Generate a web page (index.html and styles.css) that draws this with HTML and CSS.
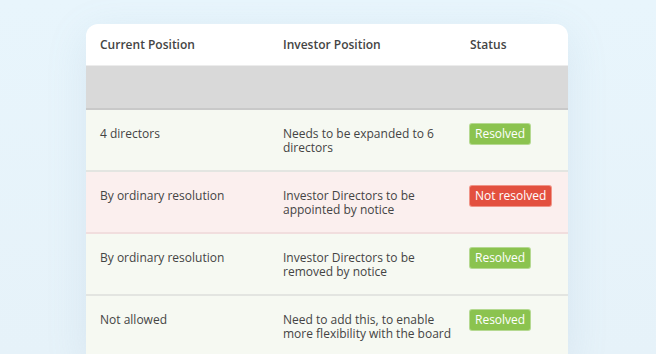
FILE: index.html
```html
<!DOCTYPE html>
<html>
<head>
    <title>Board Positions</title>
    <meta name="viewport" content="width=device-width, initial-scale=1.0">
    <link rel="stylesheet" href="styles.css">
</head>
<body>
    <div class="positions-card">
        <table class="positions-table">
            <colgroup>
                <col class="col-current">
                <col class="col-investor">
                <col class="col-status">
            </colgroup>
            <thead>
                <tr>
                    <th>Current Position</th>
                    <th>Investor Position</th>
                    <th>Status</th>
                </tr>
            </thead>
            <tbody>
                <tr class="row-blank">
                    <td colspan="3"></td>
                </tr>
                <tr class="row-ok">
                    <td>4 directors</td>
                    <td>Needs to be expanded to 6 directors</td>
                    <td><span class="badge resolved">Resolved</span></td>
                </tr>
                <tr class="row-bad">
                    <td>By ordinary resolution</td>
                    <td>Investor Directors to be appointed by notice</td>
                    <td><span class="badge not-resolved">Not resolved</span></td>
                </tr>
                <tr class="row-ok">
                    <td>By ordinary resolution</td>
                    <td>Investor Directors to be removed by notice</td>
                    <td><span class="badge resolved">Resolved</span></td>
                </tr>
                <tr class="row-ok">
                    <td>Not allowed</td>
                    <td>Need to add this, to enable more flexibility with the board</td>
                    <td><span class="badge resolved">Resolved</span></td>
                </tr>
            </tbody>
        </table>
    </div>
</body>
</html>
```

FILE: styles.css
```css
body {
    margin: 0;
    height: 354px;
    overflow: hidden;
    background: linear-gradient(180deg, #e8f5fc 0%, #e6f2f9 100%);
    font-family: 'Open Sans', 'Liberation Sans', sans-serif;
}

.positions-card {
    width: 482px;
    margin: 24px 0 0 86px;
    background-color: white;
    border-radius: 12px 12px 0 0;
    overflow: hidden;
    box-shadow: 0 10px 40px rgba(120, 160, 190, 0.15);
}

.positions-table {
    width: 100%;
    border-collapse: collapse;
    table-layout: fixed;
    font-size: 12px;
    line-height: 14px;
    color: #444;
}

.col-current {
    width: 183px;
}

.col-investor {
    width: 187px;
}

.positions-table th {
    text-align: left;
    font-weight: 600;
    color: #444;
    padding: 14px 0 13px 14px;
    border-bottom: 1px solid #ececec;
}

.positions-table td {
    vertical-align: top;
    padding: 17px 0 15px 14px;
}

.row-blank td {
    height: 42px;
    padding: 0;
    background-color: #d9d9d9;
    border-bottom: 2px solid #c9c9c9;
}

.row-ok td {
    background-color: #f6f9f2;
    border-bottom: 2px solid #e3e5e1;
}

.row-bad td {
    background-color: #fbefee;
    border-bottom: 2px solid #f1dede;
}

.badge {
    display: inline-block;
    margin-top: -6px;
    padding: 0 5px;
    height: 20px;
    line-height: 20px;
    border-radius: 2px;
    color: white;
    font-size: 12px;
}

.badge.resolved {
    background-color: #8bc34f;
    box-shadow: 0 0 0 1px #b5d991;
}

.badge.not-resolved {
    background-color: #e3503f;
    box-shadow: 0 0 0 1px #f09488;
}
```
